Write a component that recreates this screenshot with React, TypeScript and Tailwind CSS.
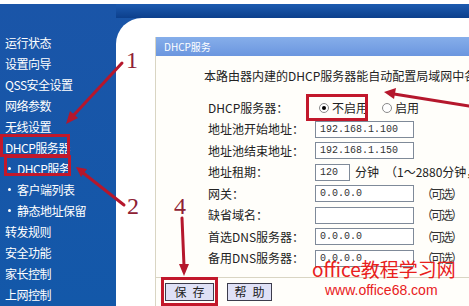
import React from 'react';

const CJK = '"Noto Sans CJK SC", "Noto Sans", sans-serif';

const menu: { label: string; sub?: boolean }[] = [
  { label: '运行状态' },
  { label: '设置向导' },
  { label: 'QSS安全设置' },
  { label: '网络参数' },
  { label: '无线设置' },
  { label: 'DHCP服务器' },
  { label: 'DHCP服务', sub: true },
  { label: '客户端列表', sub: true },
  { label: '静态地址保留', sub: true },
  { label: '转发规则' },
  { label: '安全功能' },
  { label: '家长控制' },
  { label: '上网控制' },
];

function TextBox({ value, width = 'w-[99px]' }: { value: string; width?: string }) {
  return (
    <div
      className={`${width} h-[17px] border border-[#7f8a99] bg-white pl-[4px] text-[10px] leading-[15px] text-[#333] shrink-0`}
      style={{ fontFamily: '"Liberation Mono", monospace' }}
    >
      {value}
    </div>
  );
}

function Row({ label, children }: { label: string; children?: React.ReactNode }) {
  return (
    <div className="flex items-center h-[21.5px]">
      <div className="w-[107px] shrink-0">{label}</div>
      {children}
    </div>
  );
}

function Optional() {
  return <span className="ml-[7px] tracking-[-2px] text-[#333]">（可选）</span>;
}

export default function App() {
  return (
    <div
      className="relative w-[469px] h-[306px] overflow-hidden bg-white pt-[4px]"
      style={{ fontFamily: CJK }}
    >
      <div className="flex h-[302px] bg-gradient-to-b from-[#1a55a8] to-[#1358a9]">
        {/* sidebar */}
        <div className="w-[116px] shrink-0 pt-[28px] text-white text-[12px] tracking-[-0.5px]">
          {menu.map((m) => (
            <div key={m.label} className="h-[21px] leading-[21px] flex items-center whitespace-nowrap">
              {m.sub ? (
                <>
                  <span className="ml-[8px] w-[3px] h-[3px] rounded-full bg-white" />
                  <span className="ml-[6px]">{m.label}</span>
                </>
              ) : (
                <span className="ml-[5px]">{m.label}</span>
              )}
            </div>
          ))}
        </div>

        {/* content */}
        <div className="flex-1 flex flex-col">
          <div className="h-[14px] bg-gradient-to-b from-[#1d5bb0] to-[#0c3f8c]" />
          <div className="flex-1 bg-white rounded-tl-[26px] pl-[39px] pt-[19px]">
            <div className="h-full flex flex-col border-l border-[#d9d5c3] bg-[#fffefa]">
              <div className="h-[19px] bg-gradient-to-b from-[#86aeea] to-[#6b96df] pl-[8px] text-[10px] leading-[19px] text-white">
                DHCP服务
              </div>
              <div className="flex-1 pl-[48px] pt-[10px] text-[12px] text-[#222]">
                <div className="whitespace-nowrap h-[20px] leading-[20px]">
                  本路由器内建的DHCP服务器能自动配置局域网中各计算机的TCP/IP协议。
                </div>
                <div className="pl-[4px] pt-[11px] whitespace-nowrap">
                  <Row label="DHCP服务器：">
                    <span className="ml-[4px] w-[10px] h-[10px] rounded-full border border-[#8a8a8a] bg-white flex items-center justify-center">
                      <span className="w-[4px] h-[4px] rounded-full bg-black" />
                    </span>
                    <span className="ml-[3px]">不启用</span>
                    <span className="ml-[14px] w-[10px] h-[10px] rounded-full border border-[#8a8a8a] bg-white" />
                    <span className="ml-[3px]">启用</span>
                  </Row>
                  <Row label="地址池开始地址：">
                    <TextBox value="192.168.1.100" />
                  </Row>
                  <Row label="地址池结束地址：">
                    <TextBox value="192.168.1.150" />
                  </Row>
                  <Row label="地址租期：">
                    <TextBox value="120" width="w-[35px]" />
                    <span className="ml-[5px]">分钟</span>
                    <span className="ml-[6px]">（1～2880分钟，</span>
                  </Row>
                  <Row label="网关：">
                    <TextBox value="0.0.0.0" />
                    <Optional />
                  </Row>
                  <Row label="缺省域名：">
                    <TextBox value="" />
                    <Optional />
                  </Row>
                  <Row label="首选DNS服务器：">
                    <TextBox value="0.0.0.0" />
                    <Optional />
                  </Row>
                  <Row label="备用DNS服务器：">
                    <TextBox value="0.0.0.0" />
                    <Optional />
                  </Row>
                </div>
              </div>
              <div className="h-[29px] shrink-0 border-t border-[#d9d5c3] flex items-center pl-[9px] gap-[13px] text-[12px] text-[#222]">
                <div className="w-[49px] h-[18px] bg-[#dfe1f6] border border-[#3c3c4c] flex items-center justify-center tracking-[6px] pl-[6px]">
                  保存
                </div>
                <div className="w-[45px] h-[18px] bg-[#dfe1f6] border border-[#3c3c4c] flex items-center justify-center tracking-[6px] pl-[6px]">
                  帮助
                </div>
              </div>
            </div>
          </div>
        </div>
      </div>

      {/* watermark */}
      <div className="absolute left-[312px] top-[258px] whitespace-nowrap text-[19px] leading-[22px] text-[#e8201c]">
        office教程学习网
      </div>
      <div
        className="absolute left-[325px] top-[282px] whitespace-nowrap text-[14px] leading-[16px] text-[#e8201c]"
        style={{ fontFamily: '"Liberation Sans", Arial, sans-serif' }}
      >
        www.office68.com
      </div>

      {/* red annotation boxes */}
      <div className="absolute left-[0px] top-[134px] w-[70px] h-[23px] border-[3px] border-[#c2182b]" />
      <div className="absolute left-[4px] top-[155px] w-[67px] h-[21px] border-[3px] border-[#c2182b]" />
      <div className="absolute left-[306px] top-[94px] w-[62px] h-[27px] border-[3px] border-[#c2182b]" />
      <div className="absolute left-[161px] top-[277px] w-[57px] h-[29px] border-[3px] border-[#c2182b]" />

      {/* numbers */}
      <div
        className="absolute left-[126px] top-[48px] text-[24px] leading-[24px] text-[#8e2133]"
        style={{ fontFamily: '"Liberation Serif", serif' }}
      >
        1
      </div>
      <div
        className="absolute left-[127px] top-[194px] text-[24px] leading-[24px] text-[#8e2133]"
        style={{ fontFamily: '"Liberation Serif", serif' }}
      >
        2
      </div>
      <div
        className="absolute left-[174px] top-[194px] text-[24px] leading-[24px] text-[#8e2133]"
        style={{ fontFamily: '"Liberation Serif", serif' }}
      >
        4
      </div>

      {/* arrows */}
      <svg className="absolute inset-0 pointer-events-none" width="469" height="306" viewBox="0 0 469 306">
        <g stroke="#b5172c" strokeWidth="3" strokeLinecap="round" fill="none">
          <line x1="122" y1="63" x2="72" y2="117" />
          <line x1="124" y1="205" x2="82" y2="172" />
          <line x1="182" y1="218" x2="184" y2="266" />
          <line x1="469" y1="106" x2="394" y2="94" />
        </g>
        <g fill="#b5172c">
          <polygon points="66,124 70,111 78,118" />
          <polygon points="76,167 87,169 81,177" />
          <polygon points="184,276 179,264 189,264" />
          <polygon points="384,92 396,88 394,99" />
        </g>
      </svg>
    </div>
  );
}
